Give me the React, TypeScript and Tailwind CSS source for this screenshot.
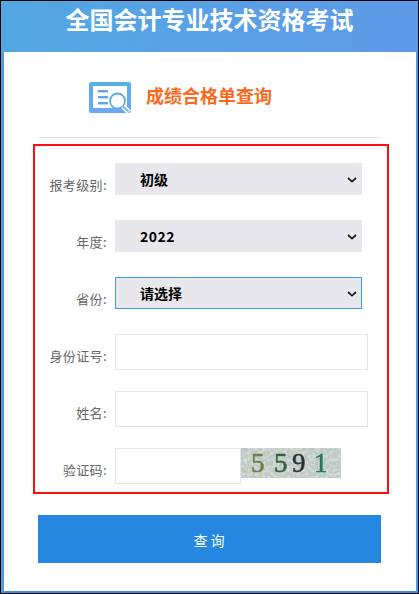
const font = { fontFamily: '"Noto Sans CJK SC", "Noto Sans", sans-serif' };

function Row({ label, top, children }: { label: string; top: string; children: React.ReactNode }) {
  return (
    <div className={`flex items-start ${top}`}>
      <label className="w-[67px] pt-[6px] text-right text-[13px] leading-[32px] tracking-[0.4px] text-[#666] whitespace-nowrap">{label}</label>
      {children}
    </div>
  );
}

function Sel({ value, focus, wide }: { value: string; focus?: boolean; wide?: boolean }) {
  return (
    <div className="relative ml-[8px] h-[32px] w-[247px]">
      <select
        defaultValue={value}
        className={`block h-full w-full appearance-none bg-[#e8e8ec] pl-[24px] text-[14px] font-bold text-black outline-none ${wide ? "tracking-[0.5px]" : ""} ${focus ? "border border-[#3a9fe8]" : "border border-[#e8e8ec]"}`}
        style={font}
      >
        <option>{value}</option>
      </select>
      <svg width="10" height="6" viewBox="0 0 10 6" className="pointer-events-none absolute left-[232px] top-[14px]">
        <path d="M1 1 L5 4.6 L9 1" fill="none" stroke="#1c1c22" strokeWidth="1.7" />
      </svg>
    </div>
  );
}

function Captcha() {
  return (
    <svg width="100" height="30" viewBox="0 0 100 30" className="block shrink-0">
      <defs>
        <filter id="noise" x="0" y="0" width="100%" height="100%">
          <feTurbulence type="fractalNoise" baseFrequency="0.28" numOctaves="4" seed="8" />
          <feColorMatrix values="0 0 0 0 0.5  0 0 0 0 0.58  0 0 0 0 0.54  3.4 0 0 0 -1.05" />
        </filter>
        <filter id="soft"><feGaussianBlur stdDeviation="0.7" /></filter>
      </defs>
      <rect width="100" height="30" fill="#d4dcd6" />
      <rect width="100" height="30" filter="url(#noise)" />
      <g filter="url(#soft)" fontFamily='"Liberation Serif", serif' fontSize="27" strokeWidth="0.5">
        <text x="10" y="24" fill="#6f7c45" stroke="#6f7c45">5</text>
        <text x="33" y="24" fill="#35613f" stroke="#35613f">5</text>
        <text x="51" y="24" fill="#2b3138" stroke="#2b3138">9</text>
        <text x="73" y="24" fill="#257565" stroke="#257565">1</text>
      </g>
    </svg>
  );
}

export default function App() {
  return (
    <div className="h-[594px] w-[419px] overflow-hidden border border-black bg-white" style={font}>
      <div className="h-[51px] bg-gradient-to-r from-[#52a8e2] to-[#5f99e8] pt-[1px] text-center text-[24px] font-bold leading-[34px] text-white">
        全国会计专业技术资格考试
      </div>
      <div className="flex h-[541px] flex-col border-l-[3px] border-r-[2px] border-b-[2px] border-l-[#4f9fdf] border-r-[#5b95e5] border-b-[#3f8ddd] bg-white">
        <div className="flex items-center pl-[85px] pt-[30px]">
          <svg width="43" height="31" viewBox="0 0 43 31" className="block shrink-0">
            <defs>
              <linearGradient id="ic" x1="0" y1="0" x2="0" y2="1">
                <stop offset="0" stopColor="#58b0e8" />
                <stop offset="1" stopColor="#6ea9f0" />
              </linearGradient>
            </defs>
            <rect width="42" height="31" rx="2" fill="url(#ic)" />
            <rect x="4" y="4" width="34" height="22" fill="#fff" />
            <rect x="9" y="8" width="10" height="2.4" fill="#5fa8e6" />
            <rect x="9" y="14" width="10" height="2.4" fill="#5fa8e6" />
            <rect x="9" y="20" width="10" height="2.4" fill="#5fa8e6" />
            <circle cx="28.5" cy="19" r="7.5" fill="#fff" stroke="#62a9e6" strokeWidth="1.8" />
            <path d="M34 24.5 L40 30" stroke="#fff" strokeWidth="5" fill="none" />
            <path d="M34 24.5 L39.5 29.5" stroke="#7fb6ea" strokeWidth="2" fill="none" />
          </svg>
          <span className="ml-[14px] -translate-y-[2px] text-[18px] font-bold leading-[31px] text-[#f96a1e]">成绩合格单查询</span>
        </div>

        <div className="mx-[34px] mt-[24px] h-px bg-[#e5e5e5]" />

        <div className="ml-[29px] mt-[6px] h-[350px] w-[356px] border-2 border-[#ff0b14] pl-[5px]">
          <Row label="报考级别:" top="mt-[17px]"><Sel value="初级" /></Row>
          <Row label="年度:" top="mt-[19px]"><Sel value="2022" wide /></Row>
          <Row label="省份:" top="mt-[19px]"><Sel value="请选择" focus /></Row>
          <Row label="身份证号:" top="mt-[19px]">
            <input className="ml-[8px] h-[36px] w-[253px] border border-[#e5e5e5] bg-white outline-none" />
          </Row>
          <Row label="姓名:" top="mt-[19px]">
            <input className="ml-[8px] h-[36px] w-[253px] border border-[#e5e5e5] bg-white outline-none" />
          </Row>
          <Row label="验证码:" top="mt-[19px]">
            <input className="ml-[8px] h-[36px] w-[126px] border border-[#e5e5e5] bg-white outline-none" />
            <Captcha />
          </Row>
        </div>

        <button className="ml-[34px] mt-[21px] h-[48px] w-[343px] bg-[#2587e0] pl-[2px] pt-[3px] text-[14px] tracking-[3px] text-white">
          查询
        </button>
      </div>
    </div>
  );
}
